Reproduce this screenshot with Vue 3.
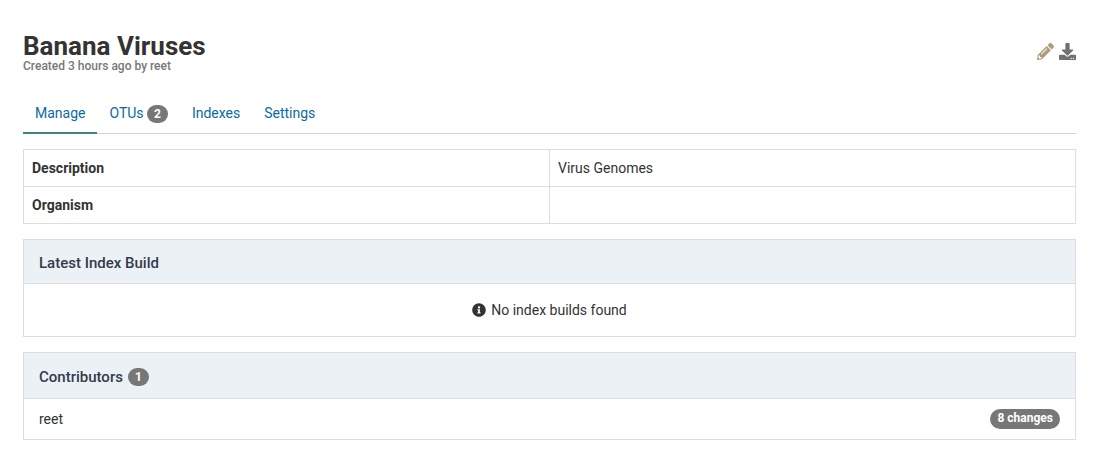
<script setup>
const tabs = [
  { label: 'Manage', active: true },
  { label: 'OTUs', count: 2 },
  { label: 'Indexes' },
  { label: 'Settings' },
]
</script>

<template>
  <main class="page">
    <header class="header">
      <div>
        <h1>Banana Viruses</h1>
        <p>Created 3 hours ago by reet</p>
      </div>
      <div class="actions">
        <svg class="pencil" viewBox="0 0 512 512"><path fill="currentColor" d="M497.9 142.1l-46.1 46.1c-4.7 4.7-12.3 4.7-17 0l-111-111c-4.7-4.7-4.7-12.3 0-17l46.1-46.1c18.7-18.7 49.1-18.7 67.9 0l60.1 60.1c18.8 18.7 18.8 49.1 0 67.9zM284.2 99.8L21.6 362.4.4 483.9c-2.9 16.4 11.4 30.6 27.8 27.8l121.5-21.3 262.6-262.6c4.7-4.7 4.7-12.3 0-17l-111-111c-4.8-4.7-12.4-4.7-17.1 0zM124.1 339.9c-5.5-5.5-5.5-14.3 0-19.8l154-154c5.5-5.5 14.3-5.5 19.8 0s5.5 14.3 0 19.8l-154 154c-5.5 5.5-14.3 5.5-19.8 0zM88 424h48v36.3l-64.5 11.3-31.1-31.1L51.7 376H88v48z" /></svg>
        <svg class="download" viewBox="0 0 512 512"><path fill="currentColor" d="M216 0h80c13.3 0 24 10.7 24 24v168h87.7c17.8 0 26.7 21.5 14.1 34.1L269.7 378.3c-7.5 7.5-19.8 7.5-27.3 0L90.1 226.1c-12.6-12.6-3.7-34.1 14.1-34.1H192V24c0-13.3 10.7-24 24-24zm296 376v112c0 13.3-10.7 24-24 24H24c-13.3 0-24-10.7-24-24V376c0-13.3 10.7-24 24-24h146.7l49 49c20.1 20.1 52.5 20.1 72.6 0l49-49H488c13.3 0 24 10.7 24 24zm-124 88c0-11-9-20-20-20s-20 9-20 20 9 20 20 20 20-9 20-20zm64 0c0-11-9-20-20-20s-20 9-20 20 9 20 20 20 20-9 20-20z" /></svg>
      </div>
    </header>

    <nav class="tabs">
      <a v-for="tab in tabs" :key="tab.label" :class="{ active: tab.active }">{{ tab.label }}<span v-if="tab.count" class="badge">{{ tab.count }}</span></a>
    </nav>

    <table>
      <tbody>
        <tr><th>Description</th><td>Virus Genomes</td></tr>
        <tr><th>Organism</th><td></td></tr>
      </tbody>
    </table>

    <section class="panel build">
      <h2>Latest Index Build</h2>
      <div class="empty">
        <svg viewBox="0 0 512 512"><path fill="currentColor" d="M256 8C119 8 8 119.1 8 256c0 137 111 248 248 248s248-111 248-248C504 119.1 393 8 256 8zm0 110c23.2 0 42 18.8 42 42s-18.8 42-42 42-42-18.8-42-42 18.8-42 42-42zm56 254c0 6.6-5.4 12-12 12h-88c-6.6 0-12-5.4-12-12v-24c0-6.6 5.4-12 12-12h12v-64h-12c-6.6 0-12-5.4-12-12v-24c0-6.6 5.4-12 12-12h64c6.6 0 12 5.4 12 12v100h12c6.6 0 12 5.4 12 12v24z" /></svg>
        <span>No index builds found</span>
      </div>
    </section>

    <section class="panel contributors">
      <h2>Contributors<span class="badge">1</span></h2>
      <div class="person"><span>reet</span><span class="badge">8 changes</span></div>
    </section>
  </main>
</template>

<style>
body { background: #fff; }
</style>

<style scoped>
* { box-sizing: border-box; }
.page {
  padding: 32px 18px 0 23px;
  font: 14px/20px Roboto, sans-serif;
  color: #333;
}
.header { display: flex; justify-content: space-between; height: 61px; }
h1 { margin: 0; font-size: 26px; line-height: 28px; font-weight: 700; }
p { margin: 0; font-size: 12px; line-height: 12px; font-weight: 500; color: #777; }
.actions { display: flex; gap: 5px; padding-top: 11px; }
.actions svg { width: 17px; height: 17px; }
.pencil { color: #b09c78; }
.download { color: #707070; }
.tabs { display: flex; height: 41px; border-bottom: 1px solid #d5d5d5; }
.tabs a { height: 41px; padding: 10px 12px; color: #0b69a3; }
.tabs a.active { border-bottom: 2px solid #3c8786; }
.badge {
  display: inline-block;
  padding: 3px 7px;
  border-radius: 10px;
  background: #777;
  color: #fff;
  font-size: 12px;
  line-height: 12px;
  font-weight: 700;
}
.tabs .badge { margin-left: 3.4px; }
table { width: 100%; margin-top: 15px; border-collapse: collapse; table-layout: fixed; }
th, td { height: 37px; padding: 8px; border: 1px solid #ddd; text-align: left; }
th { font-weight: 700; }
.panel { margin-top: 15px; border: 1px solid #dbdddf; }
h2 {
  display: flex;
  align-items: center;
  height: 44px;
  margin: 0;
  padding: 2px 15px 0;
  border-bottom: 1px solid #dbdddf;
  background: #ebf1f5;
  color: #333b4b;
  font-size: 15px;
  line-height: 20px;
  font-weight: 500;
}
h2 .badge { margin-left: 5px; }
.empty { display: flex; align-items: center; justify-content: center; gap: 5px; height: 52px; }
.empty svg { width: 14px; height: 14px; }
.contributors h2 { height: 46px; }
.person { display: flex; align-items: center; justify-content: space-between; height: 40px; padding: 0 15px; }
.person .badge { padding: 3px 7px 5px 7.4px; }
</style>
